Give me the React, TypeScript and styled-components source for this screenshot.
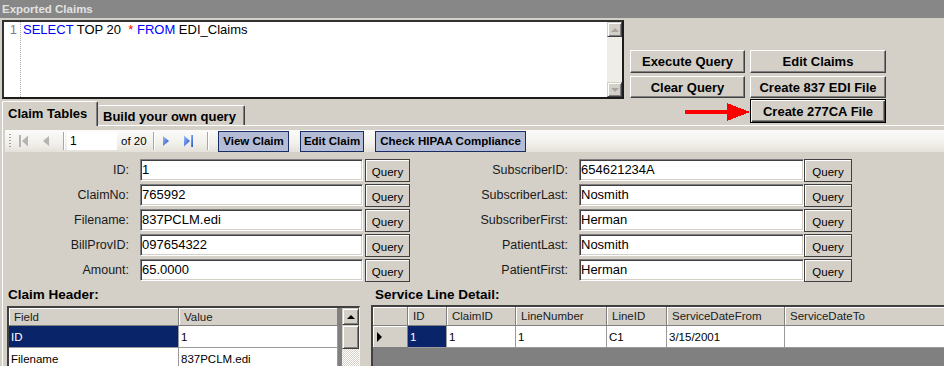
import styled, { createGlobalStyle } from "styled-components";

const GlobalStyle = createGlobalStyle`
  * { box-sizing: border-box; }
  body {
    margin: 0;
    background: #d4d0c8;
    font-family: "Liberation Sans", Arial, sans-serif;
    font-size: 12px;
    color: #000;
  }
`;

type Field = [string, string];

const leftFields: Field[] = [
  ["ID:", "1"],
  ["ClaimNo:", "765992"],
  ["Filename:", "837PCLM.edi"],
  ["BillProvID:", "097654322"],
  ["Amount:", "65.0000"],
];

const rightFields: Field[] = [
  ["SubscriberID:", "654621234A"],
  ["SubscriberLast:", "Nosmith"],
  ["SubscriberFirst:", "Herman"],
  ["PatientLast:", "Nosmith"],
  ["PatientFirst:", "Herman"],
];

const headerRows: Field[] = [
  ["ID", "1"],
  ["Filename", "837PCLM.edi"],
];

const serviceCols = [
  { title: "ID", width: 39, value: "1" },
  { title: "ClaimID", width: 69, value: "1" },
  { title: "LineNumber", width: 91, value: "1" },
  { title: "LineID", width: 60, value: "C1" },
  { title: "ServiceDateFrom", width: 118, value: "3/15/2001" },
  { title: "ServiceDateTo", width: 170, value: "" },
];
const serviceTemplate = "35px " + serviceCols.map((c) => `${c.width}px`).join(" ");

// ------------------------

const Window = styled.div`
  width: 944px;
  height: 366px;
  overflow: hidden;
  display: flex;
  flex-direction: column;
  background: #d4d0c8;
`;

const TitleBar = styled.div`
  height: 18px;
  flex-shrink: 0;
  background: #878787;
  color: #e2e2e2;
  font: bold 11.5px "Liberation Sans", Arial, sans-serif;
  line-height: 18px;
  padding-left: 2px;
`;

const TopArea = styled.div`
  display: flex;
  height: 107px;
  flex-shrink: 0;
`;

const EditorColumn = styled.div`
  display: flex;
  flex-direction: column;
  padding: 2px 0 0 2px;
`;

const Editor = styled.div`
  width: 622px;
  height: 79px;
  display: flex;
  background: #fff;
  border: 2px solid #1c1c1c;
  border-top-color: #303030;
  border-left-color: #303030;
`;

const Gutter = styled.div`
  width: 17px;
  padding-right: 3px;
  text-align: right;
  color: #808080;
  font-size: 13px;
  line-height: 15px;
  border-right: 1px dotted #a8a8a8;
`;

const Code = styled.div`
  flex: 1;
  padding-left: 2px;
  font-size: 13px;
  line-height: 15px;
  white-space: pre;
`;

const Token = styled.span<{ $color: string }>`
  color: ${(p) => p.$color};
`;

const EditorScroll = styled.div`
  width: 15px;
  display: flex;
  flex-direction: column;
  justify-content: space-between;
  background: #eeede8;
`;

const ScrollButton = styled.div<{ $size: number }>`
  width: ${(p) => p.$size}px;
  height: ${(p) => p.$size}px;
  flex-shrink: 0;
  display: flex;
  align-items: center;
  justify-content: center;
  background: #d4d0c8;
  border: 1px solid;
  border-color: #d4d0c8 #404040 #404040 #d4d0c8;
  box-shadow: inset 1px 1px #fff, inset -1px -1px #808080;
`;

const Triangle = styled.span<{ $dir: "up" | "down" | "right"; $color: string }>`
  width: 0;
  height: 0;
  ${(p) =>
    p.$dir === "up"
      ? `border-left: 4px solid transparent; border-right: 4px solid transparent; border-bottom: 4px solid ${p.$color};`
      : p.$dir === "down"
      ? `border-left: 4px solid transparent; border-right: 4px solid transparent; border-top: 4px solid ${p.$color};`
      : `border-top: 5px solid transparent; border-bottom: 5px solid transparent; border-left: 5px solid ${p.$color};`}
`;

const TabStrip = styled.div`
  height: 26px;
  display: flex;
  align-items: flex-end;
`;

const Tab = styled.div<{ $active?: boolean; $width: number }>`
  position: relative;
  z-index: ${(p) => (p.$active ? 1 : 0)};
  width: ${(p) => p.$width}px;
  height: ${(p) => (p.$active ? 25 : 20)}px;
  margin-bottom: ${(p) => (p.$active ? -1 : 0)}px;
  padding: ${(p) => (p.$active ? "3px 0 0 5px" : "2px 0 0 5px")};
  background: #d4d0c8;
  border-top: 1px solid #fff;
  border-left: ${(p) => (p.$active ? "1px solid #fff" : "none")};
  border-right: 1px solid #404040;
  box-shadow: inset -1px 0 #808080;
  border-radius: 2px 2px 0 0;
  font: bold 13px "Liberation Sans", Arial, sans-serif;
  line-height: 17px;
  white-space: nowrap;
`;

const ButtonStack = styled.div`
  margin-left: 6px;
  padding-top: 32px;
  display: flex;
  flex-direction: column;
`;

const ButtonRow = styled.div<{ $height: number; $top: number }>`
  display: flex;
  gap: 5px;
  height: ${(p) => p.$height}px;
  margin-top: ${(p) => p.$top}px;
`;

const Button = styled.div<{ $width: number; $default?: boolean }>`
  width: ${(p) => p.$width}px;
  height: 100%;
  display: flex;
  align-items: center;
  justify-content: center;
  background: #d4d0c8;
  font: bold 13px "Liberation Sans", Arial, sans-serif;
  white-space: nowrap;
  border: 1px solid;
  ${(p) =>
    p.$default
      ? `border-color: #000; box-shadow: inset 1px 1px #fff, inset -1px -1px #404040, inset -2px -2px #808080;`
      : `border-color: #fff #404040 #404040 #fff; box-shadow: inset -1px -1px #808080;`}
`;

const ArrowSlot = styled.div`
  width: 120px;
  margin-right: -5px;
  display: flex;
  align-items: center;
`;

const Panel = styled.div`
  flex: 1;
  min-height: 0;
  margin-left: 2px;
  padding: 4px 0 0 2px;
  border-top: 1px solid #fff;
  border-left: 1px solid #fff;
  display: flex;
  flex-direction: column;
`;

const Toolbar = styled.div`
  height: 22px;
  flex-shrink: 0;
  display: flex;
  align-items: center;
  background: linear-gradient(#fbfbf9, #f2f0eb 60%, #e4e1da);
`;

const Grip = styled.div`
  width: 2px;
  height: 15px;
  margin: 0 2px 0 4px;
  background: linear-gradient(#a0a0a0 50%, transparent 50%) 0 0 / 2px 3px repeat-y;
`;

const NavSlot = styled.div`
  width: 22px;
  height: 20px;
  display: flex;
  align-items: center;
  justify-content: center;
`;

const ToolSep = styled.div<{ $ml: number; $mr: number }>`
  width: 2px;
  height: 18px;
  margin: 0 ${(p) => p.$mr}px 0 ${(p) => p.$ml}px;
  border-left: 1px solid #a9a7a0;
  border-right: 1px solid #fff;
`;

const PageInput = styled.div`
  width: 50px;
  height: 18px;
  background: #fff;
  padding-left: 3px;
  font-size: 12px;
  line-height: 18px;
`;

const PageCount = styled.div`
  width: 30px;
  padding-left: 4px;
  font-size: 11.5px;
  white-space: nowrap;
`;

const ToolButton = styled.div<{ $width: number }>`
  width: ${(p) => p.$width}px;
  height: 21px;
  display: flex;
  align-items: center;
  justify-content: center;
  background: #b5bdd6;
  border: 1px solid #1a2c64;
  font: bold 11.5px "Liberation Sans", Arial, sans-serif;
  white-space: nowrap;
  & + & {
    margin-left: 11px;
  }
`;

const FormArea = styled.div`
  display: flex;
  margin-top: 7px;
  flex-shrink: 0;
`;

const FieldColumn = styled.div`
  display: flex;
  flex-direction: column;
`;

const FieldRow = styled.div`
  display: flex;
  align-items: flex-start;
  height: 25px;
`;

const FieldLabel = styled.div<{ $width: number }>`
  width: ${(p) => p.$width}px;
  margin-right: 11px;
  text-align: right;
  font-size: 12.5px;
  line-height: 22px;
  color: #1a1a1a;
  white-space: nowrap;
`;

const FieldInput = styled.div<{ $width: number }>`
  width: ${(p) => p.$width}px;
  height: 22px;
  background: #fff;
  border: 1px solid;
  border-color: #808080 #fff #fff #808080;
  box-shadow: inset 1px 1px #404040, inset -1px -1px #d4d0c8;
  padding-left: 1px;
  font-size: 13px;
  line-height: 20px;
  white-space: nowrap;
`;

const QueryButton = styled.div<{ $width: number; $gap: number }>`
  width: ${(p) => p.$width}px;
  height: 23px;
  margin-left: ${(p) => p.$gap}px;
  background: #d4d0c8;
  border: 1px solid #404040;
  box-shadow: inset 1px 1px #fff;
  text-align: center;
  padding-top: 5px;
  font-size: 11.5px;
  line-height: 14px;
`;

const BottomArea = styled.div`
  display: flex;
  flex: 1;
  min-height: 0;
`;

const GridBlock = styled.div<{ $ml: number }>`
  margin-left: ${(p) => p.$ml}px;
  display: flex;
  flex-direction: column;
  flex-shrink: 0;
`;

const SectionTitle = styled.div<{ $pl: number }>`
  height: 21px;
  padding-left: ${(p) => p.$pl}px;
  font: bold 13.5px "Liberation Sans", Arial, sans-serif;
  line-height: 21px;
  white-space: nowrap;
`;

const DataGrid = styled.div<{ $width: number; $mt: number }>`
  width: ${(p) => p.$width}px;
  height: 90px;
  margin-top: ${(p) => p.$mt}px;
  display: flex;
  background: #808080;
  border-top: 2px solid #404040;
  border-left: 2px solid #404040;
  border-right: 1px solid #f4f3f0;
  overflow: hidden;
`;

const GridTable = styled.div`
  flex: 1;
  display: flex;
  flex-direction: column;
`;

const GridRow = styled.div<{ $cols: string; $height: number }>`
  display: grid;
  grid-template-columns: ${(p) => p.$cols};
  height: ${(p) => p.$height}px;
  flex-shrink: 0;
`;

const HeaderCell = styled.div`
  display: flex;
  align-items: center;
  padding-left: 5px;
  background: #d4d0c8;
  border-right: 1px solid #808080;
  border-bottom: 1px solid #808080;
  box-shadow: inset 1px 1px #fff;
  font-size: 11.5px;
  color: #202020;
  white-space: nowrap;
  overflow: hidden;
`;

const DataCell = styled.div<{ $selected?: boolean }>`
  display: flex;
  align-items: center;
  padding-left: 2px;
  background: ${(p) => (p.$selected ? "#0a246a" : "#fff")};
  color: ${(p) => (p.$selected ? "#fff" : "#000")};
  border-right: 1px solid #9a9a9a;
  border-bottom: 1px solid #9a9a9a;
  font-size: 11.5px;
  white-space: nowrap;
  overflow: hidden;
`;

const RowHeader = styled.div`
  display: flex;
  align-items: center;
  padding-left: 4px;
  background: #d4d0c8;
  border-right: 1px solid #808080;
  border-bottom: 1px solid #808080;
  box-shadow: inset 1px 1px #fff;
`;

const GridScroll = styled.div`
  width: 17px;
  margin-left: 4px;
  display: flex;
  flex-direction: column;
  background: repeating-conic-gradient(#d4d0c8 0 25%, #fff 0 50%) 0 0 / 2px 2px;
`;

const ScrollThumb = styled.div`
  height: 24px;
  background: #d4d0c8;
  border: 1px solid;
  border-color: #d4d0c8 #404040 #404040 #d4d0c8;
  box-shadow: inset 1px 1px #fff, inset -1px -1px #808080;
`;

// ------------------------

function RedArrow() {
  return (
    <svg width="120" height="24" viewBox="0 0 120 24" shapeRendering="crispEdges">
      <rect x="55" y="11" width="43" height="4" fill="#f00" />
      <polygon points="97,4 120,13 97,22" fill="#f00" />
    </svg>
  );
}

type NavKind = "first" | "prev" | "next" | "last";

function NavIcon({ kind }: { kind: NavKind }) {
  const enabled = kind === "next" || kind === "last";
  const fill = enabled ? `url(#nav-${kind})` : "#b4b4b4";
  const left = kind === "first" || kind === "prev";
  return (
    <svg width="12" height="14" viewBox="0 0 12 14">
      <defs>
        <linearGradient id={`nav-${kind}`} x1="0" y1="0" x2="1" y2="1">
          <stop offset="0" stopColor="#9cc0ff" />
          <stop offset="1" stopColor="#1c4fc0" />
        </linearGradient>
      </defs>
      {kind === "first" && <rect x="1" y="1" width="2" height="12" fill={fill} />}
      {kind === "last" && <rect x="9" y="1" width="2" height="12" fill={fill} />}
      {left ? (
        <polygon points={kind === "first" ? "10,1.5 4,7 10,12.5" : "9,2 3,7 9,12"} fill={fill} />
      ) : (
        <polygon points={kind === "last" ? "2,1.5 8,7 2,12.5" : "3,2 9,7 3,12"} fill={fill} />
      )}
    </svg>
  );
}

export default function App() {
  return (
    <>
      <GlobalStyle />
      <Window>
        <TitleBar>Exported Claims</TitleBar>
        <TopArea>
          <EditorColumn>
            <Editor>
              <Gutter>1</Gutter>
              <Code>
                <Token $color="#0000ff">SELECT</Token>
                {" TOP 20  "}
                <Token $color="#ff0000">*</Token> <Token $color="#0000ff">FROM</Token>
                {" EDI_Claims"}
              </Code>
              <EditorScroll>
                <ScrollButton $size={15}>
                  <Triangle $dir="up" $color="#a7a6a2" />
                </ScrollButton>
                <ScrollButton $size={15}>
                  <Triangle $dir="down" $color="#a7a6a2" />
                </ScrollButton>
              </EditorScroll>
            </Editor>
            <TabStrip>
              <Tab $active $width={96}>
                Claim Tables
              </Tab>
              <Tab $width={147}>Build your own query</Tab>
            </TabStrip>
          </EditorColumn>
          <ButtonStack>
            <ButtonRow $height={23} $top={0}>
              <Button $width={115}>Execute Query</Button>
              <Button $width={136}>Edit Claims</Button>
            </ButtonRow>
            <ButtonRow $height={22} $top={3}>
              <Button $width={115}>Clear Query</Button>
              <Button $width={136}>Create 837 EDI File</Button>
            </ButtonRow>
            <ButtonRow $height={24} $top={1}>
              <ArrowSlot>
                <RedArrow />
              </ArrowSlot>
              <Button $width={136} $default>
                Create 277CA File
              </Button>
            </ButtonRow>
          </ButtonStack>
        </TopArea>

        <Panel>
          <Toolbar>
            <Grip />
            <NavSlot>
              <NavIcon kind="first" />
            </NavSlot>
            <NavSlot>
              <NavIcon kind="prev" />
            </NavSlot>
            <ToolSep $ml={6} $mr={2} />
            <PageInput>1</PageInput>
            <PageCount>of 20</PageCount>
            <ToolSep $ml={6} $mr={0} />
            <NavSlot>
              <NavIcon kind="next" />
            </NavSlot>
            <NavSlot>
              <NavIcon kind="last" />
            </NavSlot>
            <ToolSep $ml={8} $mr={9} />
            <ToolButton $width={71}>View Claim</ToolButton>
            <ToolButton $width={64}>Edit Claim</ToolButton>
            <ToolButton $width={151}>Check HIPAA Compliance</ToolButton>
          </Toolbar>

          <FormArea>
            <FieldColumn>
              {leftFields.map(([label, value]) => (
                <FieldRow key={label}>
                  <FieldLabel $width={124}>{label}</FieldLabel>
                  <FieldInput $width={223}>{value}</FieldInput>
                  <QueryButton $width={45} $gap={2}>
                    Query
                  </QueryButton>
                </FieldRow>
              ))}
            </FieldColumn>
            <FieldColumn>
              {rightFields.map(([label, value]) => (
                <FieldRow key={label}>
                  <FieldLabel $width={158}>{label}</FieldLabel>
                  <FieldInput $width={225}>{value}</FieldInput>
                  <QueryButton $width={48} $gap={0}>
                    Query
                  </QueryButton>
                </FieldRow>
              ))}
            </FieldColumn>
          </FormArea>

          <BottomArea>
            <GridBlock $ml={2}>
              <SectionTitle $pl={1}>Claim Header:</SectionTitle>
              <DataGrid $width={353} $mt={1}>
                <GridTable>
                  <GridRow $cols="170px 159px" $height={18}>
                    <HeaderCell>Field</HeaderCell>
                    <HeaderCell>Value</HeaderCell>
                  </GridRow>
                  {headerRows.map(([field, value], i) => (
                    <GridRow key={field} $cols="170px 159px" $height={22}>
                      <DataCell $selected={i === 0}>{field}</DataCell>
                      <DataCell>{value}</DataCell>
                    </GridRow>
                  ))}
                </GridTable>
                <GridScroll>
                  <ScrollButton $size={17}>
                    <Triangle $dir="up" $color="#000" />
                  </ScrollButton>
                  <ScrollThumb />
                </GridScroll>
              </DataGrid>
            </GridBlock>

            <GridBlock $ml={11}>
              <SectionTitle $pl={4}>Service Line Detail:</SectionTitle>
              <DataGrid $width={600} $mt={0}>
                <GridTable>
                  <GridRow $cols={serviceTemplate} $height={19}>
                    <HeaderCell />
                    {serviceCols.map((c) => (
                      <HeaderCell key={c.title}>{c.title}</HeaderCell>
                    ))}
                  </GridRow>
                  <GridRow $cols={serviceTemplate} $height={22}>
                    <RowHeader>
                      <Triangle $dir="right" $color="#000" />
                    </RowHeader>
                    {serviceCols.map((c, i) => (
                      <DataCell key={c.title} $selected={i === 0}>
                        {c.value}
                      </DataCell>
                    ))}
                  </GridRow>
                </GridTable>
              </DataGrid>
            </GridBlock>
          </BottomArea>
        </Panel>
      </Window>
    </>
  );
}
